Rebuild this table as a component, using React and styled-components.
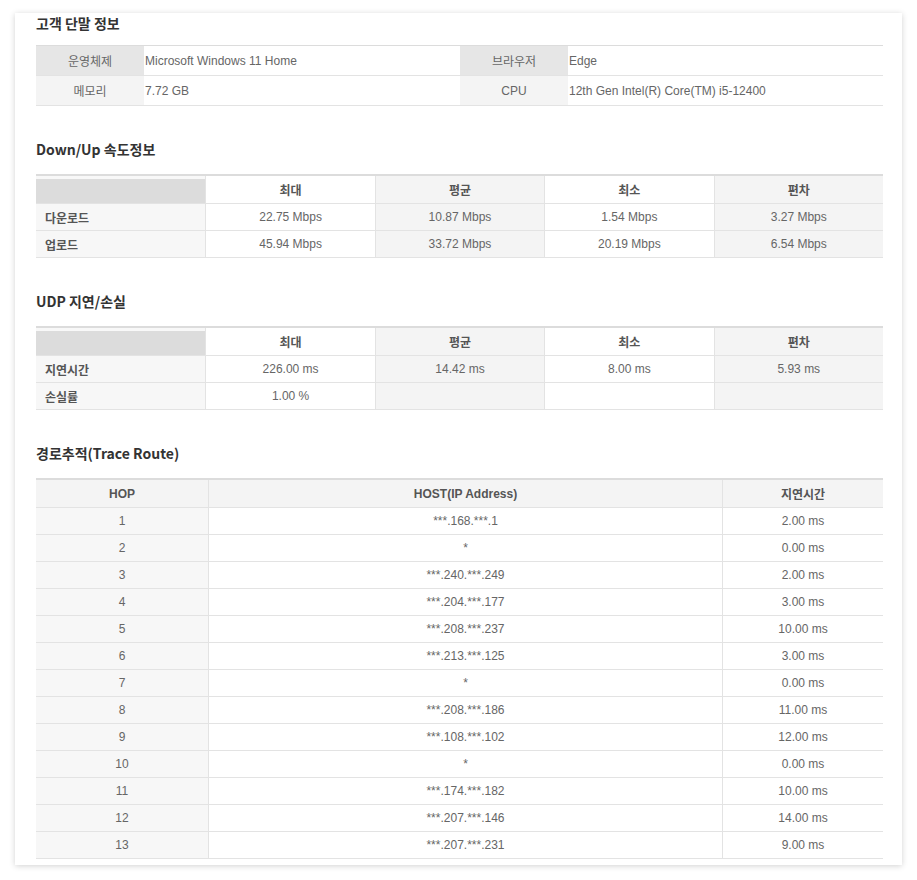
import React from 'react';
import styled, { createGlobalStyle } from 'styled-components';

const GlobalStyle = createGlobalStyle`
  body {
    margin: 0;
    background: #fff;
    font-family: "Liberation Sans", "Noto Sans CJK KR", sans-serif;
  }
`;

const Page = styled.div`
  padding: 15px;
`;

const Card = styled.div`
  background: #fff;
  box-shadow: 0 1px 6px rgba(0, 0, 0, 0.18);
  padding: 0 19px 6px 21px;
`;

const Section = styled.section`
  margin-top: ${(props) => (props.$first ? '-2px' : '33px')};
`;

const Title = styled.h3`
  margin: 0 0 ${(props) => (props.$first ? '12px' : '15px')};
  font-family: "Noto Sans CJK KR", sans-serif;
  font-size: 14px;
  line-height: 20px;
  font-weight: 700;
  color: #333;
`;

const Table = styled.table`
  width: 100%;
  table-layout: fixed;
  border-collapse: separate;
  border-spacing: 0;
  border-top: ${(props) => (props.$thin ? '1px' : '2px')} solid #dcdcdc;
`;

const Cell = styled.td`
  box-sizing: border-box;
  height: ${(props) => props.$h || 27}px;
  padding: 0 ${(props) => (props.$align === 'left' ? '0 0 9px' : '0')};
  padding-left: ${(props) => (props.$align === 'left' ? '9px' : props.$align === 'value' ? '1px' : '0')};
  text-align: ${(props) => (props.$align === 'left' || props.$align === 'value' ? 'left' : 'center')};
  vertical-align: middle;
  background: ${(props) => props.$bg || '#fff'};
  border-bottom: 1px solid #e3e3e3;
  border-left: ${(props) => (props.$divider ? '1px solid #e3e3e3' : '0')};
  font-size: 12px;
  font-weight: ${(props) => (props.$bold ? 700 : 400)};
  color: ${(props) => (props.$bold ? '#555' : '#666')};
  white-space: nowrap;
  box-shadow: ${(props) => (props.$strip ? 'inset 0 3px 0 #f8f8f8' : 'none')};
`;

const deviceRows = [
  ['운영체제', 'Microsoft Windows 11 Home', '브라우저', 'Edge', '#e6e6e6'],
  ['메모리', '7.72 GB', 'CPU', '12th Gen Intel(R) Core(TM) i5-12400', '#f4f4f4'],
];

const statHead = ['최대', '평균', '최소', '편차'];

const speedRows = [
  ['다운로드', '22.75 Mbps', '10.87 Mbps', '1.54 Mbps', '3.27 Mbps'],
  ['업로드', '45.94 Mbps', '33.72 Mbps', '20.19 Mbps', '6.54 Mbps'],
];

const udpRows = [
  ['지연시간', '226.00 ms', '14.42 ms', '8.00 ms', '5.93 ms'],
  ['손실률', '1.00 %', '', '', ''],
];

const hops = [
  ['***.168.***.1', '2.00 ms'],
  ['*', '0.00 ms'],
  ['***.240.***.249', '2.00 ms'],
  ['***.204.***.177', '3.00 ms'],
  ['***.208.***.237', '10.00 ms'],
  ['***.213.***.125', '3.00 ms'],
  ['*', '0.00 ms'],
  ['***.208.***.186', '11.00 ms'],
  ['***.108.***.102', '12.00 ms'],
  ['*', '0.00 ms'],
  ['***.174.***.182', '10.00 ms'],
  ['***.207.***.146', '14.00 ms'],
  ['***.207.***.231', '9.00 ms'],
];

const colBg = (i) => (i % 2 === 0 ? '#f4f4f4' : '#fff');

const StatTable = ({ rows }) => (
  <Table>
    <tbody>
      <tr>
        <Cell as="th" $h={28} $bg="#dcdcdc" $strip />
        {statHead.map((h, i) => (
          <Cell as="th" key={h} $h={28} $bg={colBg(i + 1)} $divider $bold>
            {h}
          </Cell>
        ))}
      </tr>
      {rows.map(([label, ...vals]) => (
        <tr key={label}>
          <Cell $bg="#f7f7f7" $align="left" $bold>
            {label}
          </Cell>
          {vals.map((v, i) => (
            <Cell key={i} $bg={colBg(i + 1)} $divider>
              {v}
            </Cell>
          ))}
        </tr>
      ))}
    </tbody>
  </Table>
);

const App = () => (
  <Page>
    <GlobalStyle />
    <Card>
      <Section $first>
        <Title $first>고객 단말 정보</Title>
        <Table $thin>
          <colgroup>
            <col style={{ width: 108 }} />
            <col style={{ width: 316 }} />
            <col style={{ width: 108 }} />
            <col />
          </colgroup>
          <tbody>
            {deviceRows.map(([l1, v1, l2, v2, bg]) => (
              <tr key={l1}>
                <Cell $h={30} $bg={bg}>{l1}</Cell>
                <Cell $h={30} $align="value">{v1}</Cell>
                <Cell $h={30} $bg={bg}>{l2}</Cell>
                <Cell $h={30} $align="value">{v2}</Cell>
              </tr>
            ))}
          </tbody>
        </Table>
      </Section>

      <Section>
        <Title>Down/Up 속도정보</Title>
        <StatTable rows={speedRows} />
      </Section>

      <Section>
        <Title>UDP 지연/손실</Title>
        <StatTable rows={udpRows} />
      </Section>

      <Section>
        <Title>경로추적(Trace Route)</Title>
        <Table>
          <colgroup>
            <col style={{ width: 172 }} />
            <col style={{ width: 514 }} />
            <col />
          </colgroup>
          <tbody>
            <tr>
              <Cell as="th" $h={28} $bg="#f4f4f4" $bold>HOP</Cell>
              <Cell as="th" $h={28} $bg="#f4f4f4" $divider $bold>HOST(IP Address)</Cell>
              <Cell as="th" $h={28} $bg="#f4f4f4" $divider $bold>지연시간</Cell>
            </tr>
            {hops.map(([host, ms], i) => (
              <tr key={i}>
                <Cell $bg="#f7f7f7">{i + 1}</Cell>
                <Cell $divider>{host}</Cell>
                <Cell $divider>{ms}</Cell>
              </tr>
            ))}
          </tbody>
        </Table>
      </Section>
    </Card>
  </Page>
);

export default App;
